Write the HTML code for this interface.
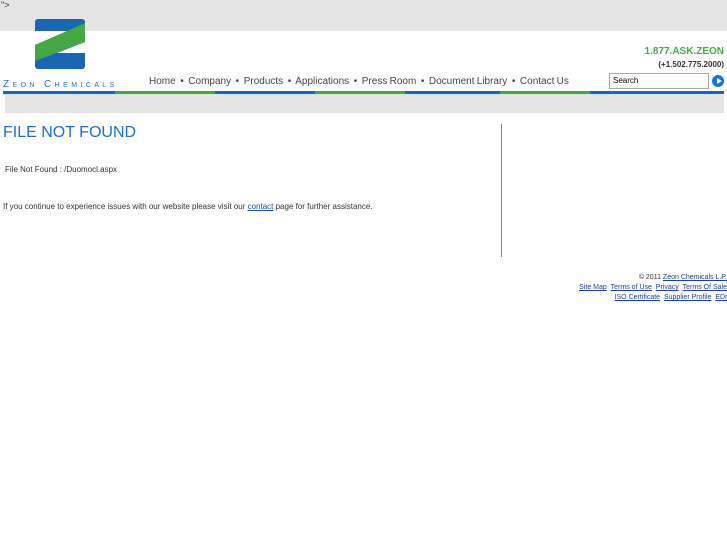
<!DOCTYPE html>
<html><head><style>
body{margin:0;width:727px;height:545px;background:#fff;font-family:"Liberation Sans",sans-serif;position:relative;overflow:hidden}
.a{position:absolute}
</style></head><body>
<div class="a" style="left:0;top:0;width:727px;height:31px;background:#e4e4e4"></div>
<div class="a" style="left:1px;top:0;font-size:9px;color:#333">"&gt;</div>
<svg class="a" style="left:35px;top:19px" width="50" height="50" viewBox="0 0 50 50">
<rect x="0" y="0" width="50" height="50" rx="3" fill="#1b66b3"/>
<polygon points="0,12 33,12 0,26" fill="#fff"/>
<polygon points="50,23 50,34 22,34" fill="#fff"/>
<polygon points="0,26 50,4 50,23 0,42" fill="#45a845"/>
</svg>
<div class="a" style="left:3px;top:79px;font-size:10px;color:#2a6fc0;letter-spacing:3.4px;font-variant:small-caps">Zeon Chemicals</div>
<div class="a" style="left:149px;top:76px;font-size:10px;color:#444;white-space:nowrap;word-spacing:-0.5px">Home &nbsp;•&nbsp; Company &nbsp;•&nbsp; Products &nbsp;•&nbsp; Applications &nbsp;•&nbsp; Press Room &nbsp;•&nbsp; Document Library &nbsp;•&nbsp; Contact Us</div>
<div class="a" style="right:3px;top:46px;font-size:10px;color:#45a845;font-weight:bold">1.877.ASK.ZEON</div>
<div class="a" style="right:3px;top:60px;font-size:8px;color:#333;font-weight:bold">(+1.502.775.2000)</div>
<div class="a" style="left:609px;top:73px;height:16px;border:1px solid #aaa;font-size:8px;line-height:14px;padding-left:3px;box-sizing:border-box;width:100px;background:#fff">Search</div>
<div class="a" style="left:712px;top:75px;width:12px;height:12px;border-radius:50%;background:#1a73d9"></div>
<div class="a" style="left:717px;top:78px;width:0;height:0;border-left:5px solid #fff;border-top:3px solid transparent;border-bottom:3px solid transparent"></div>
<div class="a" style="left:3px;top:91px;width:721px;height:3px;background:linear-gradient(90deg,#1565c8 0 112px,#45a845 112px 212px,#1565c8 212px 312px,#45a845 312px 402px,#1565c8 402px 497px,#45a845 497px 587px,#1565c8 587px)"></div>
<div class="a" style="left:5px;top:94px;width:719px;height:19px;background:#e4e4e4"></div>
<div class="a" style="left:3px;top:124px;font-size:16px;color:#1b6fd0">FILE NOT FOUND</div>
<div class="a" style="left:5px;top:165px;font-size:8px;color:#333">File Not Found : /Duomocl.aspx</div>
<div class="a" style="left:3px;top:202px;font-size:8px;color:#333">If you continue to experience issues with our website please visit our <u style="color:#1b4fa0">contact</u> page for further assistance.</div>
<div class="a" style="left:501px;top:124px;width:1px;height:133px;background:#888"></div>
<div class="a" style="right:0;top:273px;font-size:7px;text-align:right;line-height:10px;white-space:nowrap;color:#1b3fa0">
<span style="color:#333">© 2011</span> <u>Zeon Chemicals L.P.</u><br>
<u>Site Map</u> &nbsp;<u>Terms of Use</u> &nbsp;<u>Privacy</u> &nbsp;<u>Terms Of Sale</u><br>
<u>ISO Certificate</u> &nbsp;<u>Supplier Profile</u> &nbsp;<u>EDI</u>
</div>
</body></html>
